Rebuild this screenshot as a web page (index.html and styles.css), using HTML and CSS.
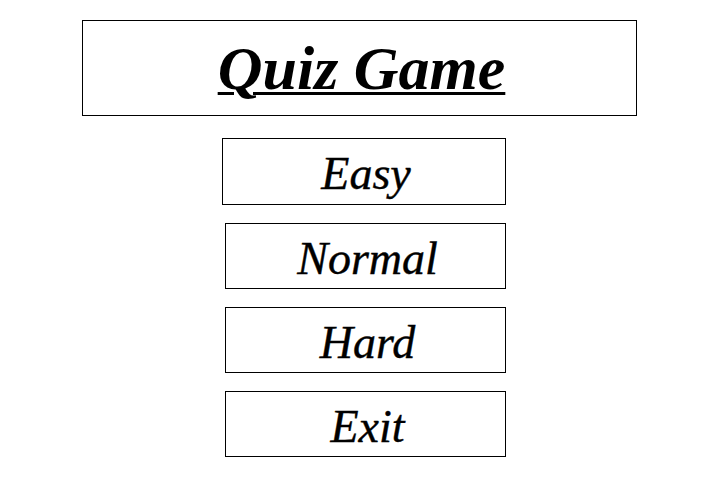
FILE: index.html
```html
<!DOCTYPE html>
<html>
<head>
<meta charset="utf-8">
<link rel="stylesheet" href="styles.css">
</head>
<body>
<div class="page">
  <div class="title-box"><h1 class="title">Quiz Game</h1></div>
  <div class="menu">
    <button class="btn btn-easy">Easy</button>
    <button class="btn">Normal</button>
    <button class="btn">Hard</button>
    <button class="btn">Exit</button>
  </div>
</div>
</body>
</html>
```
FILE: styles.css
```css
html, body {
  margin: 0;
  padding: 0;
  background: #ffffff;
}
.page {
  width: 721px;
  height: 493px;
  padding-top: 20px;
  box-sizing: border-box;
  display: flex;
  flex-direction: column;
  font-family: "Liberation Serif", serif;
  font-style: italic;
  color: #000;
}
.title-box {
  margin-left: 82px;
  width: 555px;
  height: 96px;
  box-sizing: border-box;
  border: 1px solid #000;
  display: flex;
  align-items: center;
  justify-content: center;
}
.title {
  margin: 0;
  font-size: 62px;
  line-height: 1;
  font-weight: bold;
  text-decoration: underline;
  text-decoration-thickness: 3px;
  text-underline-offset: 3px;
  padding-left: 4px;
}
.menu {
  display: flex;
  flex-direction: column;
  margin-top: 22px;
  gap: 18px;
}
.btn {
  margin-left: 225px;
  width: 281px;
  height: 66px;
  box-sizing: border-box;
  border: 1px solid #000;
  background: #fff;
  font-family: inherit;
  font-style: italic;
  font-weight: normal;
  font-size: 46px;
  -webkit-text-stroke: 0.4px #000;
  color: #000;
  padding: 4px 0 0 4px;
  display: flex;
  align-items: center;
  justify-content: center;
}
.btn-easy {
  margin-left: 222px;
  width: 284px;
  height: 67px;
}
```
